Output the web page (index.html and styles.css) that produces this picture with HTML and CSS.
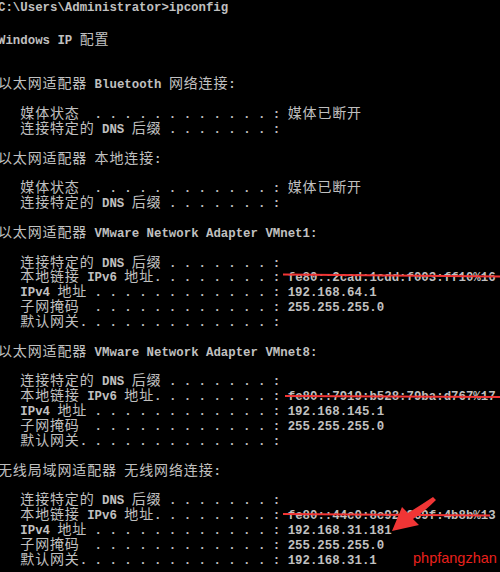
FILE: index.html
```html
<!DOCTYPE html>
<html lang="zh-CN">
<head>
<meta charset="utf-8">
<title>ipconfig</title>
<link rel="stylesheet" href="styles.css">
</head>
<body>
<div class="console">
<div class="ln">C:\Users\Administrator&gt;ipconfig</div>
<div class="ln"></div>
<div class="ln">Windows IP <span class="c">配置</span></div>
<div class="ln"></div>
<div class="ln"></div>
<div class="ln"><span class="c">以太网适配器</span> Bluetooth <span class="c">网络连接</span>:</div>
<div class="ln"></div>
<div class="ln">   <span class="c">媒体状态</span>  . . . . . . . . . . . . : <span class="c">媒体已断开</span></div>
<div class="ln">   <span class="c">连接特定的</span> DNS <span class="c">后缀</span> . . . . . . . : </div>
<div class="ln"></div>
<div class="ln"><span class="c">以太网适配器</span> <span class="c">本地连接</span>:</div>
<div class="ln"></div>
<div class="ln">   <span class="c">媒体状态</span>  . . . . . . . . . . . . : <span class="c">媒体已断开</span></div>
<div class="ln">   <span class="c">连接特定的</span> DNS <span class="c">后缀</span> . . . . . . . : </div>
<div class="ln"></div>
<div class="ln"><span class="c">以太网适配器</span> VMware Network Adapter VMnet1:</div>
<div class="ln"></div>
<div class="ln">   <span class="c">连接特定的</span> DNS <span class="c">后缀</span> . . . . . . . : </div>
<div class="ln">   <span class="c">本地链接</span> IPv6 <span class="c">地址</span>. . . . . . . . : fe80::2cad:1cdd:f003:ff10%16</div>
<div class="ln">   IPv4 <span class="c">地址</span> . . . . . . . . . . . . : 192.168.64.1</div>
<div class="ln">   <span class="c">子网掩码</span>  . . . . . . . . . . . . : 255.255.255.0</div>
<div class="ln">   <span class="c">默认网关</span>. . . . . . . . . . . . . : </div>
<div class="ln"></div>
<div class="ln"><span class="c">以太网适配器</span> VMware Network Adapter VMnet8:</div>
<div class="ln"></div>
<div class="ln">   <span class="c">连接特定的</span> DNS <span class="c">后缀</span> . . . . . . . : </div>
<div class="ln">   <span class="c">本地链接</span> IPv6 <span class="c">地址</span>. . . . . . . . : fe80::7919:b528:79ba:d767%17</div>
<div class="ln">   IPv4 <span class="c">地址</span> . . . . . . . . . . . . : 192.168.145.1</div>
<div class="ln">   <span class="c">子网掩码</span>  . . . . . . . . . . . . : 255.255.255.0</div>
<div class="ln">   <span class="c">默认网关</span>. . . . . . . . . . . . . : </div>
<div class="ln"></div>
<div class="ln"><span class="c">无线局域网适配器</span> <span class="c">无线网络连接</span>:</div>
<div class="ln"></div>
<div class="ln">   <span class="c">连接特定的</span> DNS <span class="c">后缀</span> . . . . . . . : </div>
<div class="ln">   <span class="c">本地链接</span> IPv6 <span class="c">地址</span>. . . . . . . . : fe80::44c0:8c92:969f:4b8b%13</div>
<div class="ln">   IPv4 <span class="c">地址</span> . . . . . . . . . . . . : 192.168.31.181</div>
<div class="ln">   <span class="c">子网掩码</span>  . . . . . . . . . . . . : 255.255.255.0</div>
<div class="ln">   <span class="c">默认网关</span>. . . . . . . . . . . . . : 192.168.31.1</div>
</div>
<svg class="marks" width="500" height="572" viewBox="0 0 500 572" aria-hidden="true">
  <line x1="283" y1="274.5" x2="500" y2="276.5" stroke="#f03535" stroke-width="2"/>
  <line x1="285" y1="396" x2="500" y2="397" stroke="#f03535" stroke-width="2"/>
  <line x1="283" y1="514" x2="490" y2="515.5" stroke="#f03535" stroke-width="2"/>
  <path d="M433 497 L436 500 Q424 512 413 519 L419 525 L392 531 L402 507 L408 513 Q421 505 433 497 Z" fill="#f03535"/>
</svg>
<div class="wm">phpfangzhan</div>
</body>
</html>
```
FILE: styles.css
```css
html, body {
  margin: 0;
  padding: 0;
  background: #000;
}
body {
  width: 500px;
  height: 572px;
  overflow: hidden;
  position: relative;
}
.console {
  margin-left: -2px;
  padding-top: 1px;
  font-family: "Liberation Mono", "DejaVu Sans Mono", monospace;
  font-weight: bold;
  font-size: 12.38px;
  line-height: 14.86px;
  color: #c0c0c0;
}
.ln {
  height: 14.86px;
  white-space: pre;
  overflow: visible;
}
.c {
  font-family: "Noto Sans CJK SC", sans-serif;
  font-weight: normal;
  font-size: 14px;
  letter-spacing: 0.86px;
  line-height: 14.86px;
}
.marks {
  position: absolute;
  left: 0;
  top: 0;
}
.wm {
  position: absolute;
  left: 413px;
  top: 549px;
  font-family: "Liberation Sans", Arial, sans-serif;
  font-size: 14.5px;
  color: #e8201c;
  line-height: 18px;
}
```
